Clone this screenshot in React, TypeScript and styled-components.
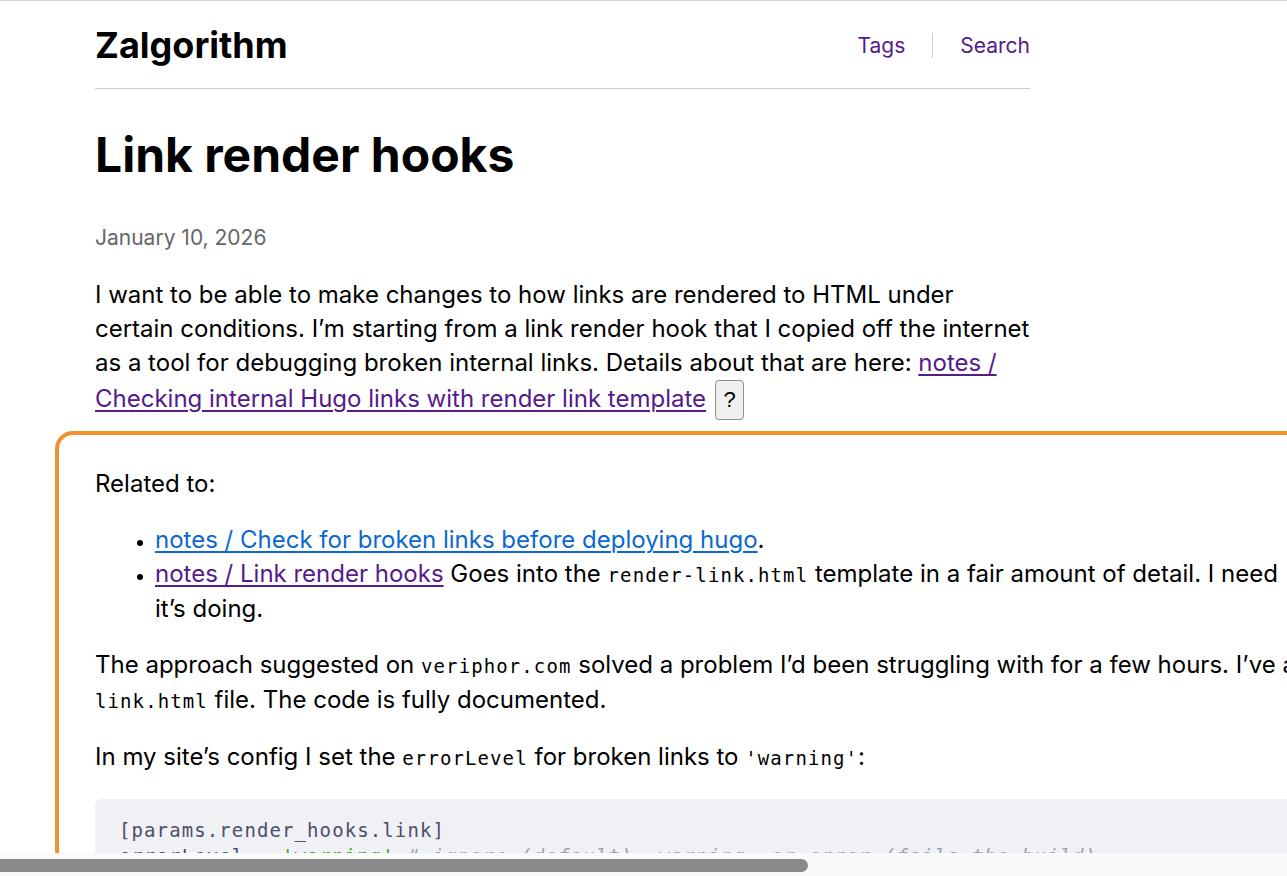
import styled, { createGlobalStyle } from 'styled-components';

const GlobalStyle = createGlobalStyle`
  html, body {
    margin: 0;
    padding: 0;
    background: #ffffff;
    overflow: hidden;
  }

  body {
    font-family: Inter, "Noto Sans", sans-serif;
    color: #000000;
  }
`;

const App = () => {
  return (
    <>
      <GlobalStyle />
      <Viewport>
        <Page>
          <Column>
            <Header>
              <SiteTitle href="#">Zalgorithm</SiteTitle>
              <Nav>
                <NavLink href="#">Tags</NavLink>
                <NavDivider />
                <NavLink href="#">Search</NavLink>
              </Nav>
            </Header>

            <Title>Link render hooks</Title>
            <PostDate>January 10, 2026</PostDate>

            <Intro>
              I want to be able to make changes to how links are rendered to HTML under certain
              conditions. I’m starting from a link render hook that I copied off the internet as a
              tool for debugging broken internal links. Details about that are here:{' '}
              <Link $visited href="#">
                notes / Checking internal Hugo links with render link template
              </Link>
              <HelpButton type="button">?</HelpButton>
            </Intro>
          </Column>

          <Callout>
            <Para>Related to:</Para>
            <List>
              <li>
                <Link href="#">notes / Check for broken links before deploying hugo</Link>.
              </li>
              <li>
                <Link $visited href="#">notes / Link render hooks</Link> Goes into the{' '}
                <Code>render-link.html</Code> template in a fair amount of detail. I need{'  '}
                <Offscreen>to go through it slowly to understand what</Offscreen>
                <br />
                it’s doing.
              </li>
            </List>
            <Para>
              The approach suggested on <Code>veriphor.com</Code> solved a problem I’d been
              struggling with for a few hours. I’ve added their code to my <Code>render-</Code>
              <br />
              <Code>link.html</Code> file. The code is fully documented.
            </Para>
            <Para>
              In my site’s config I set the <Code>errorLevel</Code> for broken links to{' '}
              <Code>'warning'</Code>:
            </Para>
            <CodeBlock>
              <CodeLine>[params.render_hooks.link]</CodeLine>
              <CodeLine>
                errorLevel = <Str>'warning'</Str>{' '}
                <Comment># ignore (default), warning, or error (fails the build)</Comment>
              </CodeLine>
            </CodeBlock>
            <Para>
              With that set, a broken internal link shows up as a warning in the build output
              instead of failing the whole build.
            </Para>
          </Callout>
        </Page>
      </Viewport>

      <ScrollTrack>
        <ScrollThumb />
      </ScrollTrack>
    </>
  );
};

export default App;

const Viewport = styled.div`
  height: 100vh;
  box-sizing: border-box;
  border-top: 1px solid #d4d4d4;
  overflow: hidden;
`;

const Page = styled.div`
  padding-left: 95px;
  width: max-content;
`;

const Column = styled.div`
  width: 935px;
`;

const Header = styled.header`
  display: flex;
  align-items: center;
  justify-content: space-between;
  height: 87px;
  border-bottom: 1px solid #cccccc;
`;

const SiteTitle = styled.a`
  font-size: 36px;
  font-weight: 700;
  color: #000000;
  text-decoration: none;
`;

const Nav = styled.nav`
  display: flex;
  align-items: center;
  gap: 27px;
  padding-top: 1px;
`;

const NavLink = styled.a`
  font-size: 21px;
  color: #551a8b;
  text-decoration: none;
`;

const NavDivider = styled.span`
  width: 1px;
  height: 25px;
  background: #cccccc;
`;

const Title = styled.h1`
  margin: 37px 0 0;
  font-size: 48px;
  line-height: 58px;
  font-weight: 700;
`;

const PostDate = styled.div`
  margin-top: 39px;
  font-size: 21px;
  line-height: 30px;
  color: #666666;
`;

const Para = styled.p`
  margin: 22px 0;
  font-size: 24px;
  line-height: 34px;

  &:first-child {
    margin-top: 0;
  }
`;

const Intro = styled(Para)`
  margin: 25px 0 11px;
`;

const Link = styled.a<{ $visited?: boolean }>`
  color: ${(p) => (p.$visited ? '#551a8b' : '#0b68cf')};
  text-decoration: underline;
  text-underline-offset: 3px;
  text-decoration-thickness: 1.5px;
`;

const Offscreen = styled.span`
  padding-left: 4px;
`;

const HelpButton = styled.button`
  display: inline-block;
  vertical-align: middle;
  width: 29px;
  height: 40px;
  margin-left: 9px;
  padding: 0;
  border: 1px solid #8f8f8f;
  border-radius: 4px;
  background: #efefef;
  font-family: "Liberation Sans", Arial, sans-serif;
  font-size: 22px;
  color: #000000;
`;

const Callout = styled.section`
  box-sizing: border-box;
  width: 1995px;
  margin: 11px 0 0 -40px;
  padding: 32px 36px 10px;
  border: 4px solid #f0922e;
  border-radius: 18px;
`;

const List = styled.ul`
  margin: 22px 0;
  padding-left: 60px;
  font-size: 24px;
  line-height: 34px;

  li::marker {
    font-size: 18px;
  }
`;

const Code = styled.code`
  font-family: "DejaVu Sans Mono", "Liberation Mono", monospace;
  font-size: 19px;
  letter-spacing: 1.1px;
`;

const CodeBlock = styled.pre`
  margin: 24px 0;
  padding: 18px 24px;
  border-radius: 6px;
  background: #eff1f5;
  color: #4c4f69;
  font-family: "DejaVu Sans Mono", "Liberation Mono", monospace;
  font-size: 19px;
  letter-spacing: 1.1px;
  line-height: 26px;
`;

const CodeLine = styled.div`
  white-space: pre;
`;

const Str = styled.span`
  color: #40a02b;
`;

const Comment = styled.span`
  color: #9ca0b0;
  font-style: italic;
`;

const ScrollTrack = styled.div`
  position: fixed;
  left: 0;
  right: 0;
  bottom: 0;
  height: 23px;
  background: #fafafa;
`;

const ScrollThumb = styled.div`
  width: 808px;
  height: 13px;
  margin-top: 6px;
  border-radius: 0 7px 7px 0;
  background: #8a8a8a;
`;
